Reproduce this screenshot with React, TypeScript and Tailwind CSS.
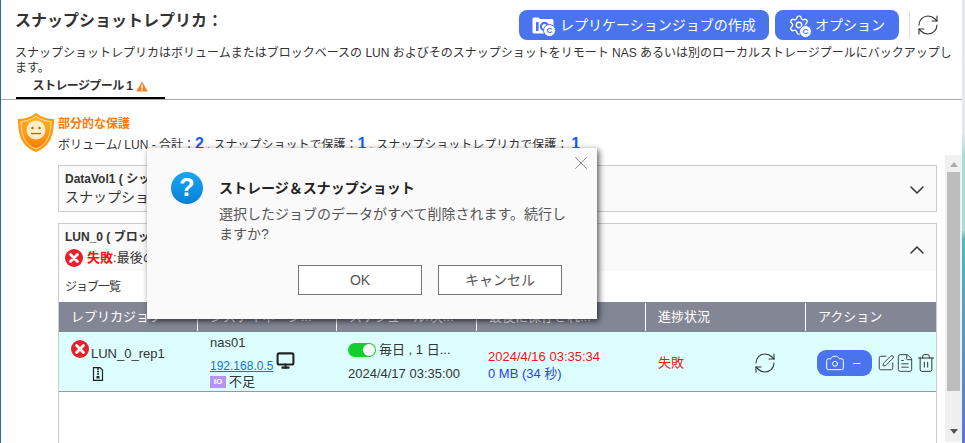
import React from 'react';
import { ChevronDown, ChevronUp, RefreshCw, X, Camera, Trash2, Monitor, SquarePen, FileText, Settings } from 'lucide-react';

const FONT = 'font-["Liberation_Sans","Noto_Sans_CJK_JP",sans-serif]';

const Shield = () => (
  <svg width="38" height="41" viewBox="0 0 38 41">
    <defs>
      <linearGradient id="sh" x1="0" y1="0" x2="0" y2="1">
        <stop offset="0" stopColor="#ffb52e" />
        <stop offset="1" stopColor="#ff7a00" />
      </linearGradient>
    </defs>
    <path d="M19 1 C14 5 8 7 1 7 C1 22 4 34 19 40 C34 34 37 22 37 7 C30 7 24 5 19 1 Z" fill="#ff9a0a" />
    <path d="M19 4 C14 8 9 9 4 9.5 C4 22 7 32 19 37 C31 32 34 22 34 9.5 C29 9 24 8 19 4 Z" fill="url(#sh)" stroke="#ffe2a8" strokeWidth="1" />
    <circle cx="19" cy="18" r="9.5" fill="#ffeec8" />
    <circle cx="15.5" cy="16" r="1.2" fill="#a86a10" />
    <circle cx="22.5" cy="16" r="1.2" fill="#a86a10" />
    <rect x="14" y="21" width="10" height="1.2" fill="#a86a10" />
  </svg>
);

const ErrorIcon = ({ size = 18 }: { size?: number }) => (
  <svg width={size} height={size} viewBox="0 0 18 18" className="shrink-0">
    <circle cx="9" cy="9" r="9" fill="#e8202a" />
    <path d="M5.6 5.6 L12.4 12.4 M12.4 5.6 L5.6 12.4" stroke="#fff" strokeWidth="2.8" strokeLinecap="round" />
  </svg>
);

const BadgeC = () => (
  <span className="absolute -right-[2px] -bottom-[2px] flex h-[13px] w-[13px] items-center justify-center rounded-full border border-[#4a74ee] bg-white text-[8px] leading-none font-bold text-[#4a74ee]">
    C
  </span>
);

// white folder with the IO mark, used on the create button
const ReplicaIcon = () => (
  <svg width="22" height="17" viewBox="0 0 22 17">
    <path d="M1.5 0.5 H6.5 L8 2 H20 A1.5 1.5 0 0 1 21.5 3.5 V15 A1.5 1.5 0 0 1 20 16.5 H2 A1.5 1.5 0 0 1 0.5 15 V1.5 Z" fill="#fff" />
    <rect x="4" y="5" width="2.6" height="9" fill="#4a74ee" />
    <circle cx="12.5" cy="9.5" r="3.6" fill="none" stroke="#4a74ee" strokeWidth="2.2" />
  </svg>
);

const LUN_COLS = 'grid-cols-[138px_139px_140px_169px_160px_131px]';

export default function App() {
  return (
    <div className={`${FONT} relative h-[443px] w-[965px] overflow-hidden border-l border-l-[#2f5fc9] bg-white text-[#333]`}>
      <div className="flex items-start justify-between pt-[10px] pr-[25px] pl-[14px]">
        <h1 className="pt-[1px] text-[16px] leading-[20px] font-bold">スナップショットレプリカ：</h1>
        <div className="flex items-center">
          <button className="mr-[6px] flex h-[30px] w-[250px] items-center rounded-[8px] bg-[#4a74ee] pl-[13px] text-[14px] text-white">
            <span className="relative mr-[6px] flex h-[20px] w-[22px] items-center">
              <ReplicaIcon />
              <BadgeC />
            </span>
            レプリケーションジョブの作成
          </button>
          <button className="flex h-[30px] w-[124px] items-center rounded-[8px] bg-[#4a74ee] pl-[13px] text-[14px] text-white">
            <span className="relative mr-[5px] block h-[22px] w-[22px]">
              <Settings size={22} strokeWidth={1.5} />
              <BadgeC />
            </span>
            オプション
          </button>
          <span className="mr-[6px] ml-[10px] h-[26px] w-px bg-[#ddd]" />
          <RefreshCw size={24} strokeWidth={1.1} className="text-[#333]" />
        </div>
      </div>

      <p className="mt-[6px] pr-[10px] pl-[14px] text-[12px] leading-[14.5px]">
        スナップショットレプリカはボリュームまたはブロックベースの LUN およびそのスナップショットをリモート NAS あるいは別のローカルストレージプールにバックアップします。
      </p>

      <div className="border-b border-b-[#aaa] pl-[15px]">
        <div className="flex h-[24px] w-[149px] items-center justify-center border-b-[2px] border-b-black text-[12px] font-bold tracking-[-0.6px]">
          <span className="mr-[4px]">ストレージプール 1</span>
          <svg width="12" height="11" viewBox="0 0 12 11">
            <path d="M6 0.5 L11.8 10.5 H0.2 Z" fill="#f58220" />
            <rect x="5.3" y="3.5" width="1.4" height="4" fill="#fff" />
            <rect x="5.3" y="8.2" width="1.4" height="1.4" fill="#fff" />
          </svg>
        </div>
      </div>

      <div className="flex pt-[12px] pl-[16px]">
        <Shield />
        <div className="pl-[3px]">
          <div className="pt-[4px] text-[12px] leading-[16px] font-bold text-[#ff7a00]">部分的な保護</div>
          <div className="flex items-baseline pt-[2px] text-[12px] leading-[20px]">
            <span>ボリューム/ LUN - 合計：</span>
            <span className="text-[16px] font-bold text-[#0b5cff]">2</span>
            <span className="ml-[3px]">, スナップショットで保護：</span>
            <span className="text-[16px] font-bold text-[#0b5cff]">1</span>
            <span className="ml-[3px]">, スナップショットレプリカで保護：</span>
            <span className="ml-[3px] text-[16px] font-bold text-[#0b5cff]">1</span>
          </div>
        </div>
      </div>

      <div className="flex">
        <div className="ml-[57px] w-[879px]">
          <div className="relative mt-[10px] h-[47px] border-[1px] border-[#ccc] bg-[#fafafa] pt-[5px] pl-[6px] text-[12px]">
            <div className="leading-[16px] font-bold">DataVol1 ( シック</div>
            <div className="text-[14px] leading-[20px]">スナップショット</div>
            <ChevronDown size={24} strokeWidth={1.5} className="absolute top-[12px] right-[7px]" />
          </div>

          <div className="relative mt-[11px] h-[300px] border-[1px] border-[#ccc] border-b-0 bg-white text-[13px]">
            <div className="h-[47px] bg-[#fafafa] pt-[5px] pl-[6px]">
              <div className="text-[12px] leading-[16px] font-bold">LUN_0 ( ブロック</div>
              <div className="flex items-center gap-[4px] pt-[4px] leading-[18px]">
                <ErrorIcon />
                <span>
                  <span className="font-bold text-[#f01414]">失敗</span>:最後のスナ
                </span>
              </div>
              <ChevronUp size={24} strokeWidth={1.5} className="absolute top-[14px] right-[7px]" />
            </div>
            <div className="flex h-[31px] items-center pl-[6px] text-[12px] tracking-[-1px]">ジョブ一覧</div>

            <div className={`grid h-[30px] ${LUN_COLS} items-center bg-[#838795] text-[13px] text-white`}>
              <div className="truncate pl-[12px]">レプリカジョブ</div>
              <div className="truncate border-l border-l-white pl-[12px] leading-[28px]">ジステイネーシ...</div>
              <div className="truncate border-l border-l-white pl-[12px] leading-[28px]">スケジュール/次...</div>
              <div className="truncate border-l border-l-white pl-[12px] leading-[28px]">最後に保存され...</div>
              <div className="border-l border-l-white pl-[12px] leading-[28px]">進捗状況</div>
              <div className="border-l border-l-white pl-[12px] leading-[28px]">アクション</div>
            </div>

            <div className={`grid h-[60px] ${LUN_COLS} border-b border-b-[#999] bg-[#dcfefe]`}>
              <div className="pt-[8px] pl-[12px]">
                <div className="flex items-start">
                  <ErrorIcon />
                  <span className="pt-[6px] pl-[2px] leading-[15px]">LUN_0_rep1</span>
                </div>
                <svg width="12" height="14" viewBox="0 0 12 14" className="mt-[6px] ml-[21px]">
                  <path d="M1.5 0.7 H8 L10.5 3 V13.3 H1.5 Z" fill="none" stroke="#222" strokeWidth="1.2" />
                  <path d="M5 2 H7 M5 4.5 H7 M5 7 H7" stroke="#222" strokeWidth="1.3" />
                  <rect x="4.5" y="9" width="3" height="2.5" fill="#222" />
                </svg>
              </div>
              <div className="pt-[3px] pl-[13px]">
                <div className="leading-[16px]">nas01</div>
                <div className="flex h-[22px] items-end">
                  <span className="text-[12px] leading-[14px] text-[#0e78c8] underline">192.168.0.5</span>
                  <Monitor size={19} strokeWidth={2.6} className="mb-[3px] ml-[3px] text-[#222]" />
                </div>
                <div className="flex items-center gap-[3px] pt-[1px] leading-[16px]">
                  <span className="flex h-[12px] w-[16px] items-center justify-center bg-[#b794f0] text-[8px] font-bold text-white">IO</span>
                  不足
                </div>
              </div>
              <div className="pt-[10px] pl-[12px]">
                <div className="flex items-center gap-[3px] leading-[16px]">
                  <span className="flex h-[14px] w-[28px] items-center justify-end rounded-full bg-[#12cf2e] pr-[1px]">
                    <span className="h-[12px] w-[12px] rounded-full bg-white" />
                  </span>
                  毎日 , 1 日...
                </div>
                <div className="pt-[9px] leading-[14px]">2024/4/17 03:35:00</div>
              </div>
              <div className="pt-[16px] pl-[12px] leading-[17px]">
                <div className="text-[#f01414]">2024/4/16 03:35:34</div>
                <div className="text-[#2a3ff0]">0 MB (34 秒)</div>
              </div>
              <div className="flex items-center pt-[2px] pl-[13px]">
                <span className="w-[95px] text-[#f01414]">失敗</span>
                <RefreshCw size={24} strokeWidth={1.1} className="text-[#333]" />
              </div>
              <div className="flex items-center pt-[2px] pl-[12px]">
                <span className="mr-[5px] flex h-[26px] w-[55px] items-center rounded-[9px] bg-[#4a74ee] pl-[8px] text-white">
                  <Camera size={20} strokeWidth={1.2} />
                  <span className="pl-[8px]">–</span>
                </span>
                <SquarePen size={18} strokeWidth={1.2} className="text-[#333]" />
                <FileText size={20} strokeWidth={1.1} className="text-[#333]" />
                <Trash2 size={20} strokeWidth={1.1} className="ml-[1px] text-[#222]" />
              </div>
            </div>
          </div>
        </div>

        <div className="ml-[8px] flex h-[287px] w-[17px] flex-col items-center bg-[#f0f0f0]">
          <span className="mt-[7px] h-0 w-0 border-x-[4px] border-b-[5px] border-x-transparent border-b-[#aaa]" />
          <div className="mt-[5px] h-[219px] w-[13px] bg-[#bdbdbd]" />
          <span className="mt-[38px] h-0 w-0 border-x-[4px] border-t-[5px] border-x-transparent border-t-[#555]" />
        </div>
      </div>

      {/* window behind the page, showing at the right edge */}
      <div className="absolute top-0 right-0 h-[443px] w-[3px] bg-[linear-gradient(to_bottom,#e4e9f0_0%,#e4e9f0_30%,#a5e0dc_35%,#a5e0dc_52%,#50b8c0_54%,#5a78d0_100%)]" />

      {/* confirm dialog */}
      <div className="absolute top-[148px] left-[146px] h-[171px] w-[450px] bg-[#fafafa] shadow-[2px_2px_6px_rgba(0,0,0,0.65)]">
        <X size={22} strokeWidth={1} className="absolute top-[4px] right-[5px] text-[#888]" />
        <div className="flex pt-[24px] pl-[24px]">
          <span className="flex h-[32px] w-[32px] items-center justify-center rounded-full bg-gradient-to-b from-[#18a8f2] to-[#0a80d8] text-[25px] font-bold text-white">?</span>
          <div className="w-[376px] pl-[16px]">
            <div className="pt-[5px] text-[14px] leading-[22px] font-bold text-[#222]">ストレージ＆スナップショット</div>
            <div className="pt-[5px] text-[14px] leading-[20px] text-[#555]">選択したジョブのデータがすべて削除されます。続行しますか?</div>
          </div>
        </div>
        <div className="flex justify-end gap-[16px] pt-[21px] pr-[35px]">
          <button className="h-[30px] w-[124px] border border-[#777] bg-white text-[14px] text-[#555]">OK</button>
          <button className="h-[30px] w-[124px] border border-[#777] bg-white text-[14px] text-[#555]">キャンセル</button>
        </div>
      </div>
    </div>
  );
}
